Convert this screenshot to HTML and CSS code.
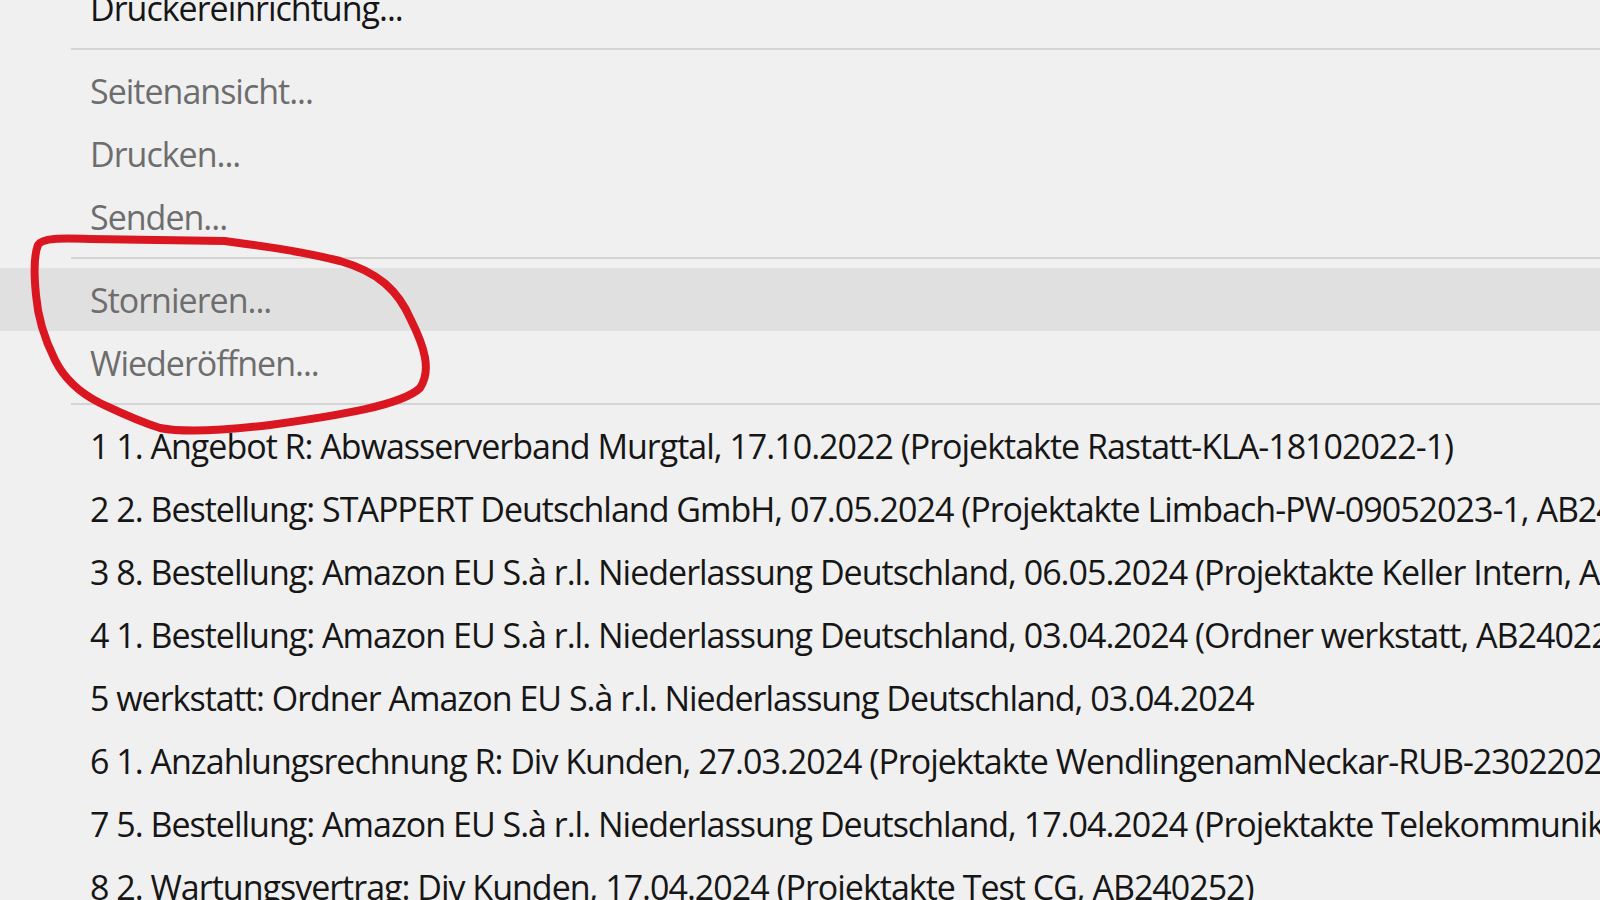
FILE: index.html
```html
<!DOCTYPE html>
<html lang="de">
<head>
<meta charset="utf-8">
<title>Menü</title>
<link rel="stylesheet" href="styles.css">
</head>
<body>
<div class="menu">
  <div class="item">Druckereinrichtung...</div>
  <div class="sep"></div>
  <div class="item disabled">Seitenansicht...</div>
  <div class="item disabled">Drucken...</div>
  <div class="item disabled">Senden...</div>
  <div class="sep"></div>
  <div class="item disabled hover">Stornieren...</div>
  <div class="item disabled">Wiederöffnen...</div>
  <div class="sep"></div>
  <div class="item">1 1. Angebot R: Abwasserverband Murgtal, 17.10.2022 (Projektakte Rastatt-KLA-18102022-1)</div>
  <div class="item">2 2. Bestellung: STAPPERT Deutschland GmbH, 07.05.2024 (Projektakte Limbach-PW-09052023-1, AB240231)</div>
  <div class="item">3 8. Bestellung: Amazon EU S.à r.l. Niederlassung Deutschland, 06.05.2024 (Projektakte Keller Intern, AB240198)</div>
  <div class="item">4 1. Bestellung: Amazon EU S.à r.l. Niederlassung Deutschland, 03.04.2024 (Ordner werkstatt, AB240224)</div>
  <div class="item">5 werkstatt: Ordner Amazon EU S.à r.l. Niederlassung Deutschland, 03.04.2024</div>
  <div class="item">6 1. Anzahlungsrechnung R: Div Kunden, 27.03.2024 (Projektakte WendlingenamNeckar-RUB-23022024-1)</div>
  <div class="item">7 5. Bestellung: Amazon EU S.à r.l. Niederlassung Deutschland, 17.04.2024 (Projektakte Telekommunikation, AB240250)</div>
  <div class="item">8 2. Wartungsvertrag: Div Kunden, 17.04.2024 (Projektakte Test CG, AB240252)</div>
</div>
<svg class="annotation" width="1600" height="900" viewBox="0 0 1600 900" aria-hidden="true">
  <path d="M90 239 L225 241 C262 246 300 251 340 261 C378 272 398 290 411 320 C424 346 432 370 420 388 C402 405 342 415 270 425 C220 431 180 432 160 428 C135 420 115 410 100 403 C80 393 65 380 55 360 C45 340 38 320 36 295 C34 275 34 255 38 245 C42 238 60 238 90 239 Z"/>
</svg>
</body>
</html>
```
FILE: styles.css
```css
html, body {
  margin: 0;
  padding: 0;
}
body {
  width: 1600px;
  height: 900px;
  overflow: hidden;
  background: #f0f0f0;
  position: relative;
  font-family: "Open Sans", "Noto Sans", "DejaVu Sans", sans-serif;
}
.menu {
  margin-top: -24px;
  display: flex;
  flex-direction: column;
}
.item {
  height: 63px;
  display: flex;
  align-items: center;
  padding-left: 90px;
  font-size: 34px;
  letter-spacing: -1px;
  color: #161616;
  white-space: nowrap;
  overflow: hidden;
}
.item.disabled {
  color: #6d6d6d;
}
.item.hover {
  background: #e0e0e0;
}
.sep {
  height: 20px;
  display: flex;
  align-items: center;
  padding-left: 71px;
}
.sep::after {
  content: "";
  flex: 1;
  height: 2px;
  background: #d4d4d4;
}
.annotation {
  position: absolute;
  left: 0;
  top: 0;
  pointer-events: none;
}
.annotation path {
  fill: none;
  stroke: #da1720;
  stroke-width: 8;
  stroke-linecap: round;
  stroke-linejoin: round;
}
```
